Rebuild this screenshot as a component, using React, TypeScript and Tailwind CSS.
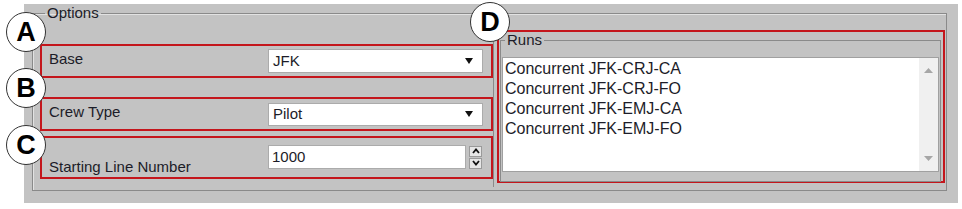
import React from "react";

const font = { fontFamily: '"Liberation Sans", Arial, sans-serif' };

function Badge({ letter, className }: { letter: string; className: string }) {
  return (
    <div
      className={`absolute w-[40px] h-[40px] rounded-full bg-white border-[1.5px] border-[#333] flex items-center justify-center text-[27px] font-bold text-black leading-none ${className}`}
    >
      {letter}
    </div>
  );
}

function Arrow() {
  return (
    <svg width="8" height="6" viewBox="0 0 8 6" className="shrink-0">
      <path d="M0 0 L8 0 L4 6 Z" fill="#111" />
    </svg>
  );
}

function Select({ value }: { value: string }) {
  return (
    <div className="w-[215px] h-[24px] bg-white border border-[#ababab] flex items-center justify-between pl-[4px] pr-[9px] text-[15px] text-[#1c1c28]">
      <span>{value}</span>
      <Arrow />
    </div>
  );
}

function Chevron({ up }: { up?: boolean }) {
  return (
    <div className="w-[13px] h-[11px] bg-[#e6e6e6] border border-[#9a9a9a] flex items-center justify-center">
      <svg width="8" height="6" viewBox="0 0 8 6">
        <path
          d={up ? "M1 5 L4 1.5 L7 5" : "M1 1 L4 4.5 L7 1"}
          stroke="#111"
          strokeWidth="1.8"
          fill="none"
        />
      </svg>
    </div>
  );
}

export default function App() {
  const runs = [
    "Concurrent JFK-CRJ-CA",
    "Concurrent JFK-CRJ-FO",
    "Concurrent JFK-EMJ-CA",
    "Concurrent JFK-EMJ-FO",
  ];
  return (
    <div className="relative w-[962px] h-[209px] bg-white pl-[24px] pt-[4px]" style={font}>
      <div className="w-[934px] h-[199px] bg-[#c3c3c3] pl-[8px] pt-[1px]">
        <fieldset className="w-[915px] h-[186px] border border-[#8a8a8a] shadow-[inset_1px_1px_0_#e2e2e2]">
          <legend className="ml-[12px] px-[2px] text-[15px] leading-[16px] text-[#1c1c28]">Options</legend>
          <div className="flex h-full">
            {/* left column */}
            <div className="shrink-0 w-[460px] pl-[7px] pt-[23px] flex flex-col">
              <div className="w-[453px] h-[34px] border-2 border-[#c4161c] flex items-center justify-between pl-[7px] pr-[8px]">
                <span className="text-[15px] text-[#1c1c28] mb-[4px]">Base</span>
                <Select value="JFK" />
              </div>
              <div className="w-[453px] h-[34px] mt-[19px] border-2 border-[#c4161c] flex items-center justify-between pl-[7px] pr-[8px]">
                <span className="text-[15px] text-[#1c1c28] mb-[4px]">Crew Type</span>
                <div className="h-[23px] flex">
                  <div className="w-[215px] h-[23px] bg-white border border-[#ababab] flex items-center justify-between pl-[4px] pr-[9px] text-[15px] text-[#1c1c28]">
                    <span>Pilot</span>
                    <Arrow />
                  </div>
                </div>
              </div>
              <div className="w-[453px] h-[43px] mt-[5px] border-2 border-[#c4161c] flex items-center justify-between pl-[7px] pr-[9px]">
                <span className="self-end mb-[1px] text-[15px] leading-[18px] text-[#1c1c28]">Starting Line Number</span>
                <div className="flex items-center gap-[3px] mb-[1px]">
                  <div className="w-[198px] h-[24px] bg-white border border-[#ababab] flex items-center pl-[3px] text-[15px] text-[#1c1c28]">
                    1000
                  </div>
                  <div className="flex flex-col gap-[1px]">
                    <Chevron up />
                    <Chevron />
                  </div>
                </div>
              </div>
            </div>
            {/* divider */}
            <div className="shrink-0 w-px bg-[#8a8a8a] mt-[6px] mb-[3px]" />
            {/* right column */}
            <div className="shrink-0 pl-[3px] pt-[9px]">
              <div className="w-[448px] h-[153px] border-2 border-[#c4161c] pl-[1px] pr-[2px]">
                <fieldset className="h-[150px] border border-[#8a8a8a]">
                  <legend className="ml-[4px] px-[2px] text-[15px] leading-[16px] text-[#1c1c28]">Runs</legend>
                  <div className="ml-[1px] mr-[1px] mt-[9px] h-[115px] bg-white border border-[#a0a0a0] flex">
                    <div className="flex-1 pl-[2px] pt-[1px]">
                      {runs.map((r) => (
                        <div key={r} className="text-[16px] leading-[20px] text-[#1c1c28]">
                          {r}
                        </div>
                      ))}
                    </div>
                    <div className="w-[19px] bg-[#f0f0f0] flex flex-col items-center justify-between py-[10px]">
                      <svg width="9" height="5" viewBox="0 0 9 5">
                        <path d="M0 5 L4.5 0 L9 5 Z" fill="#a6a6a6" />
                      </svg>
                      <svg width="9" height="5" viewBox="0 0 9 5">
                        <path d="M0 0 L4.5 5 L9 0 Z" fill="#a6a6a6" />
                      </svg>
                    </div>
                  </div>
                </fieldset>
              </div>
            </div>
          </div>
        </fieldset>
      </div>
      <Badge letter="A" className="left-[6px] top-[12px]" />
      <Badge letter="B" className="left-[6px] top-[68px]" />
      <Badge letter="C" className="left-[6px] top-[125px]" />
      <Badge letter="D" className="left-[470px] top-[2px]" />
    </div>
  );
}
